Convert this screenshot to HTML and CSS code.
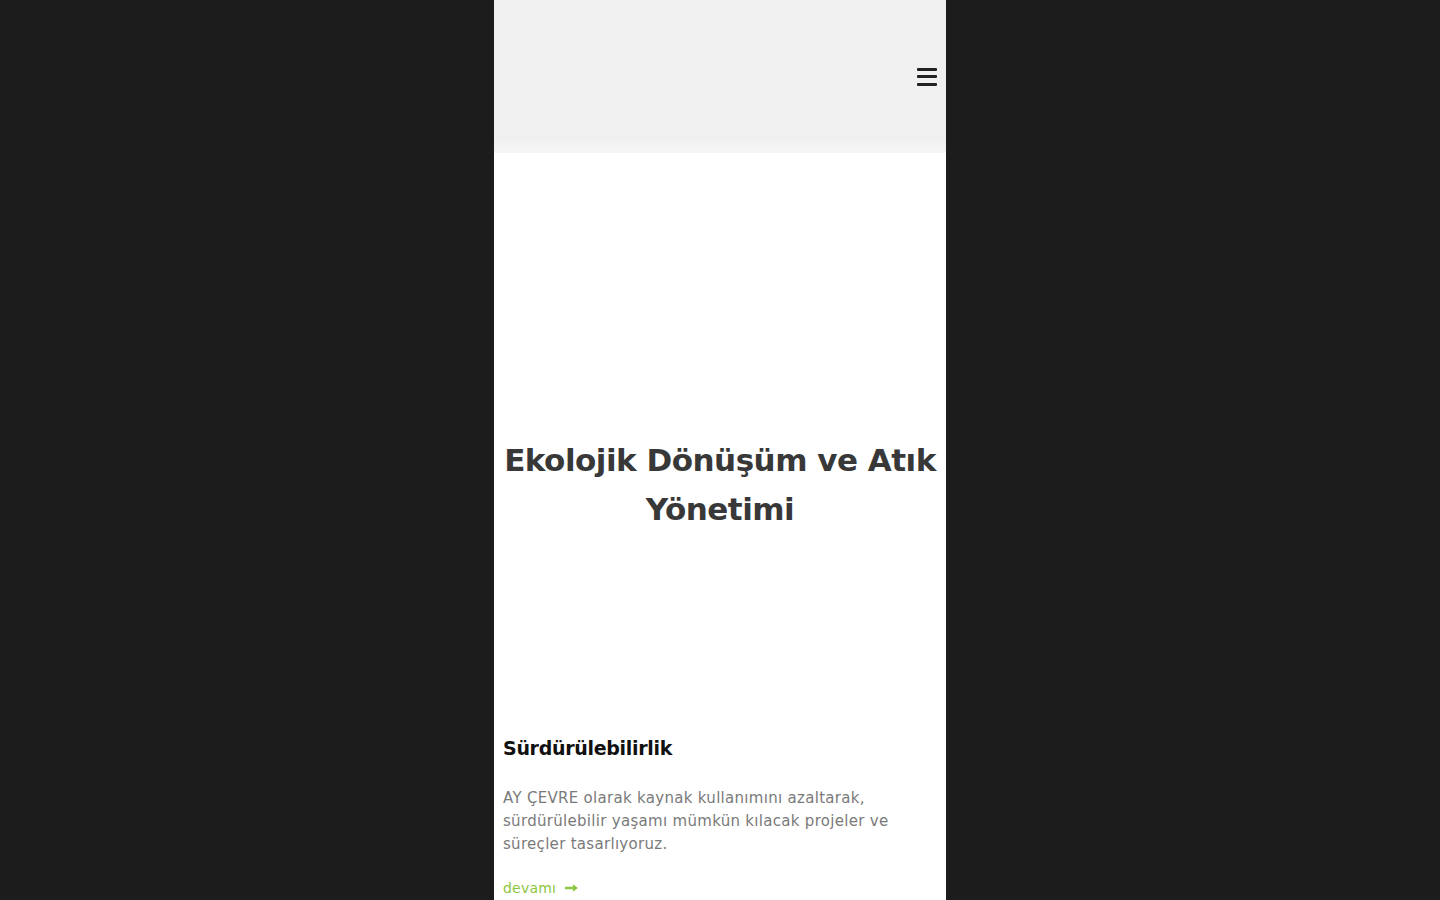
FILE: index.html
```html
<!DOCTYPE html>
<html lang="tr">
<head>
<meta charset="utf-8">
<title>AY ÇEVRE</title>
<link rel="stylesheet" href="styles.css">
</head>
<body>
<div class="page">
  <header class="header">
    <button class="menu" aria-label="Menü">
      <span></span><span></span><span></span>
    </button>
  </header>
  <section class="hero">
    <h1 class="hero-title">Ekolojik Dönüşüm ve Atık Yönetimi</h1>
  </section>
  <section class="card">
    <h2 class="card-title">Sürdürülebilirlik</h2>
    <p class="card-text">AY ÇEVRE olarak kaynak kullanımını azaltarak, sürdürülebilir yaşamı mümkün kılacak projeler ve süreçler tasarlıyoruz.</p>
    <a class="more" href="#">devamı <svg class="arrow" viewBox="0 0 14 10" width="14" height="10"><path d="M1 5H9" stroke="#8dc63f" stroke-width="2.6" stroke-linecap="round"/><path d="M8 1.2L13 5L8 8.8Z" fill="#8dc63f"/></svg></a>
  </section>
</div>
</body>
</html>
```

FILE: styles.css
```css
html, body {
  margin: 0;
  padding: 0;
  height: 100%;
}
body {
  background: #1c1c1c;
  font-family: "DejaVu Sans", "Open Sans", sans-serif;
  overflow: hidden;
}
.page {
  width: 452px;
  margin: 0 auto;
  background: #ffffff;
  min-height: 900px;
}
.header {
  height: 153px;
  background: linear-gradient(to bottom, #f0f0f0 0, #f0f0f0 140px, #f6f6f6 153px);
  display: flex;
  align-items: center;
  justify-content: flex-end;
  padding-right: 9px;
  box-sizing: border-box;
}
.menu {
  width: 20px;
  height: 18px;
  padding: 0;
  border: 0;
  background: transparent;
  display: flex;
  flex-direction: column;
  justify-content: space-between;
  cursor: pointer;
}
.menu span {
  display: block;
  height: 3px;
  background: #222;
  border-radius: 1px;
}
.hero {
  height: 570px;
  box-sizing: border-box;
  padding: 94px 6px 0;
  display: flex;
  align-items: center;
  justify-content: center;
}
.hero-title {
  margin: 0;
  text-align: center;
  font-size: 31px;
  line-height: 49px;
  font-weight: 600;
  color: #383838;
  letter-spacing: -0.5px;
}
.card {
  padding: 12px 9px 0;
}
.card-title {
  margin: 0 0 26px;
  font-size: 19px;
  line-height: 26px;
  font-weight: 600;
  color: #111;
  letter-spacing: -0.3px;
}
.card-text {
  margin: 0 0 22px;
  max-width: 400px;
  font-size: 15px;
  line-height: 23px;
  color: #7a7a7a;
  letter-spacing: 0.3px;
}
.more {
  display: inline-flex;
  align-items: center;
  color: #8dc63f;
  font-size: 14px;
  letter-spacing: 0.2px;
  text-decoration: none;
}
.arrow {
  margin-left: 9px;
}
```
